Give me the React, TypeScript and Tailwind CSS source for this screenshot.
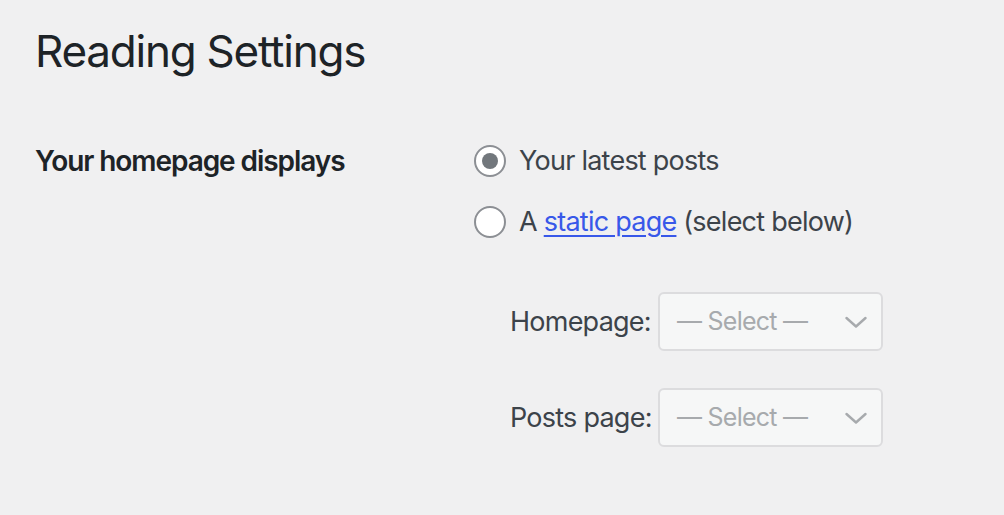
import React from 'react';

const Chevron = () => (
  <svg width="22" height="14" viewBox="0 0 22 14" fill="none" className="shrink-0">
    <path d="M1.5 3l9.5 8.5L20.5 3" stroke="#a7aaad" strokeWidth="2.4" strokeLinecap="round" strokeLinejoin="round" />
  </svg>
);

const Radio: React.FC<{ checked?: boolean }> = ({ checked }) => (
  <span className="flex h-[32px] w-[32px] shrink-0 items-center justify-center rounded-full border-2 border-[#8c8f94] bg-white">
    {checked && <span className="h-[16px] w-[16px] rounded-full bg-[#72777c]" />}
  </span>
);

const PageSelect: React.FC<{ label: string }> = ({ label }) => (
  <li className="flex items-center">
    <span className="w-[148px] whitespace-nowrap text-[27px] leading-[40px] tracking-[-0.028em] text-[#3c434a]">
      {label}
    </span>
    <div className="flex h-[59px] w-[225px] items-center justify-between rounded-[6px] border-2 border-[#dcdcde] bg-[#f6f7f7] pl-[17px] pr-[14px]">
      <span className="text-[25px] tracking-[-0.03em] text-[#a7aaad]">— Select —</span>
      <Chevron />
    </div>
  </li>
);

export default function App() {
  return (
    <div className="min-h-screen bg-[#f0f0f1] pl-[35px] pt-[23px] font-['Inter',sans-serif]">
      <h1 className="text-[44px] leading-[56px] tracking-[-0.028em] text-[#1d2327]">Reading Settings</h1>
      <div className="mt-[62px] flex">
        <div className="w-[439px] text-[28px] font-semibold leading-[40px] tracking-[-0.038em] text-[#1d2327]">
          Your homepage displays
        </div>
        <div>
          <fieldset className="flex flex-col gap-[21px]">
            <label className="flex h-[40px] items-center gap-[13px] text-[27px] tracking-[-0.028em] text-[#3c434a]">
              <Radio checked />
              <span>Your latest posts</span>
            </label>
            <label className="flex h-[40px] items-center gap-[13px] text-[27px] tracking-[-0.028em] text-[#3c434a]">
              <Radio />
              <span>
                A{' '}
                <a href="#" className="text-[#3858e9] underline underline-offset-[4px]">
                  static page
                </a>{' '}
                (select below)
              </span>
            </label>
          </fieldset>
          <ul className="mt-[50px] flex flex-col gap-[37px] pl-[36px]">
            <PageSelect label="Homepage:" />
            <PageSelect label="Posts page:" />
          </ul>
        </div>
      </div>
    </div>
  );
}
